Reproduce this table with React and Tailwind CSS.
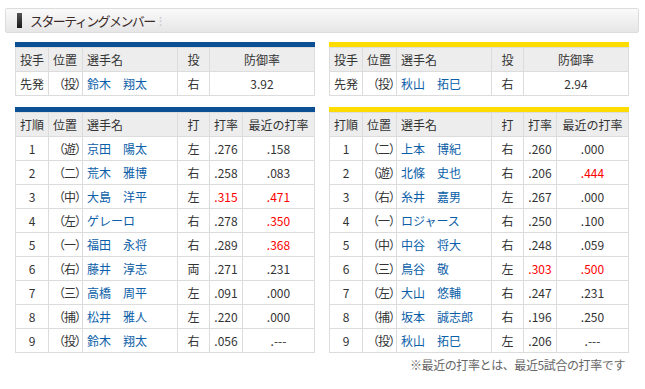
import React from 'react';

const cell = 'border border-[#dcdcdc] h-[24px] px-[4px] py-0 leading-none';
const head = cell + ' bg-[#ededed] font-normal';

const carp = {
  pitcher: { name: '鈴木　翔太', hand: '右', era: '3.92' },
  lineup: [
    ['1', '（遊）', '京田　陽太', '左', '.276', '.158', false, false],
    ['2', '（二）', '荒木　雅博', '右', '.258', '.083', false, false],
    ['3', '（中）', '大島　洋平', '左', '.315', '.471', true, true],
    ['4', '（左）', 'ゲレーロ', '右', '.278', '.350', false, true],
    ['5', '（一）', '福田　永将', '右', '.289', '.368', false, true],
    ['6', '（右）', '藤井　淳志', '両', '.271', '.231', false, false],
    ['7', '（三）', '高橋　周平', '左', '.091', '.000', false, false],
    ['8', '（捕）', '松井　雅人', '左', '.220', '.000', false, false],
    ['9', '（投）', '鈴木　翔太', '右', '.056', '.---', false, false],
  ],
};

const tigers = {
  pitcher: { name: '秋山　拓巳', hand: '右', era: '2.94' },
  lineup: [
    ['1', '（二）', '上本　博紀', '右', '.260', '.000', false, false],
    ['2', '（遊）', '北條　史也', '右', '.206', '.444', false, true],
    ['3', '（右）', '糸井　嘉男', '左', '.267', '.000', false, false],
    ['4', '（一）', 'ロジャース', '右', '.250', '.100', false, false],
    ['5', '（中）', '中谷　将大', '右', '.248', '.059', false, false],
    ['6', '（三）', '鳥谷　敬', '左', '.303', '.500', true, true],
    ['7', '（左）', '大山　悠輔', '右', '.247', '.231', false, false],
    ['8', '（捕）', '坂本　誠志郎', '右', '.196', '.250', false, false],
    ['9', '（投）', '秋山　拓巳', '左', '.206', '.---', false, false],
  ],
};

function TeamBlock({ team, bar }) {
  return (
    <div className="w-[300px]">
      <div className={`h-[5px] ${bar}`} />
      <table className="w-full border-collapse table-fixed">
        <colgroup>
          <col className="w-[33px]" />
          <col className="w-[34px]" />
          <col className="w-[95px]" />
          <col className="w-[32px]" />
          <col />
        </colgroup>
        <thead>
          <tr>
            <th className={head + ' text-left'}>投手</th>
            <th className={head + ' text-left'}>位置</th>
            <th className={head + ' text-left'}>選手名</th>
            <th className={head + ' text-center'}>投</th>
            <th className={head + ' text-center'}>防御率</th>
          </tr>
        </thead>
        <tbody>
          <tr>
            <td className={cell}>先発</td>
            <td className={cell + ' tracking-[-1px]'}>（投）</td>
            <td className={cell + ' text-[#0b5ea8]'}>{team.pitcher.name}</td>
            <td className={cell + ' text-center'}>{team.pitcher.hand}</td>
            <td className={cell + ' text-center'}>{team.pitcher.era}</td>
          </tr>
        </tbody>
      </table>

      <div className={`h-[5px] mt-[11px] ${bar}`} />
      <table className="w-full border-collapse table-fixed">
        <colgroup>
          <col className="w-[33px]" />
          <col className="w-[34px]" />
          <col className="w-[95px]" />
          <col className="w-[32px]" />
          <col className="w-[33px]" />
          <col />
        </colgroup>
        <thead>
          <tr>
            <th className={head + ' text-left'}>打順</th>
            <th className={head + ' text-left'}>位置</th>
            <th className={head + ' text-left'}>選手名</th>
            <th className={head + ' text-center'}>打</th>
            <th className={head + ' text-center'}>打率</th>
            <th className={head + ' text-center'}>最近の打率</th>
          </tr>
        </thead>
        <tbody>
          {team.lineup.map((r) => (
            <tr key={r[0]}>
              <td className={cell + ' text-center'}>{r[0]}</td>
              <td className={cell + ' tracking-[-1px]'}>{r[1]}</td>
              <td className={cell + ' text-[#0b5ea8] whitespace-nowrap'}>{r[2]}</td>
              <td className={cell + ' text-center'}>{r[3]}</td>
              <td className={cell + ' text-center ' + (r[6] ? 'text-[#ff0000]' : '')}>{r[4]}</td>
              <td className={cell + ' text-center ' + (r[7] ? 'text-[#ff0000]' : '')}>{r[5]}</td>
            </tr>
          ))}
        </tbody>
      </table>
    </div>
  );
}

export default function App() {
  return (
    <div className="w-[645px] h-[389px] bg-white text-[#333] text-[12px] font-['Noto_Sans_CJK_JP','Noto_Sans',sans-serif] pt-[8px]">
      <div className="ml-[5px] w-[634px] h-[25px] border border-[#dddddd] rounded-[2px] bg-gradient-to-b from-[#fafafa] to-[#e6e6e6] flex items-center">
        <div className="ml-[11px] w-[5px] h-[15px] bg-gradient-to-b from-[#555] to-[#1a1a1a]" />
        <span className="ml-[8px] text-[13px] tracking-[-1.6px] text-[#3a2a2a]">スターティングメンバー</span>
        <span className="ml-[4px] text-[#c8c8c8] text-[13px] leading-none">⁝</span>
      </div>

      <div className="flex gap-[14px] px-[15px] mt-[9px]">
        <TeamBlock team={carp} bar="bg-[#0d4f93]" />
        <TeamBlock team={tigers} bar="bg-[#ffdc00]" />
      </div>

      <div className="w-[625px] text-right text-[#666] mt-[3px] tracking-[-0.4px]">
        ※最近の打率とは、最近5試合の打率です
      </div>
    </div>
  );
}
